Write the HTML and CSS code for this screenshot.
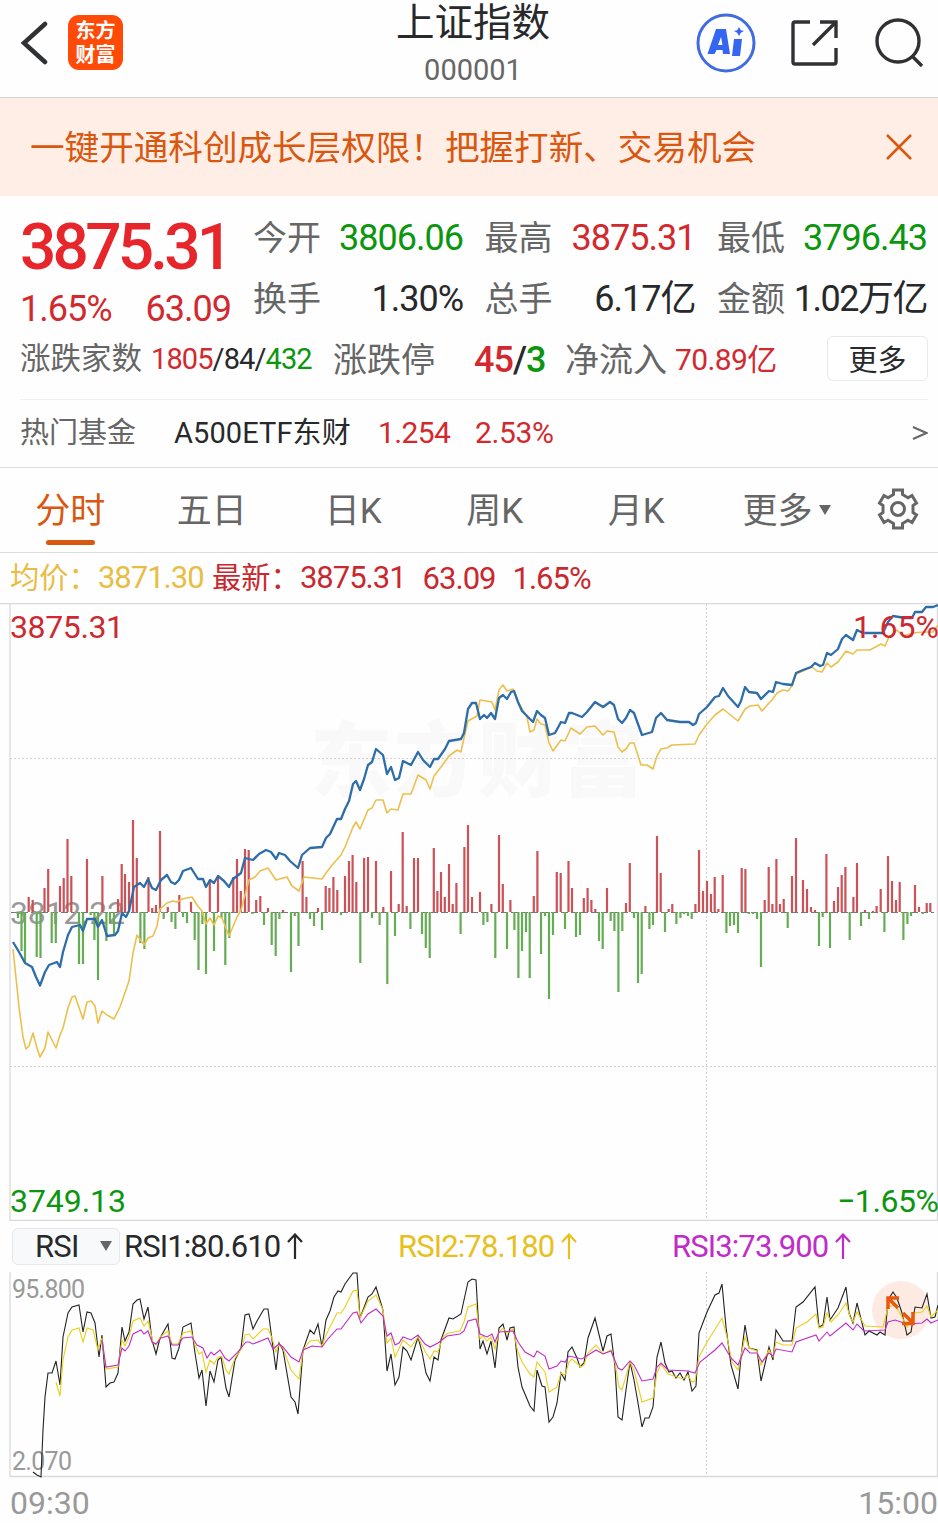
FILE: index.html
```html
<!DOCTYPE html>
<html lang="zh-CN">
<head>
    <meta charset="UTF-8">
    <meta name="viewport" content="width=device-width, initial-scale=1.0">
    <title>上证指数 000001</title>
    <link rel="stylesheet" href="styles.css">
</head>
<body>
    <!-- 顶部导航 -->
    <header class="header">
        <div class="header-left">
            <svg class="back" width="28" height="46" viewBox="0 0 28 46"><path d="M25 4L4 23L25 42"/></svg>
            <div class="logo"><span>东方</span><span>财富</span></div>
        </div>
        <div class="header-title">
            <h1>上证指数</h1>
            <span class="code">000001</span>
        </div>
        <div class="header-right">
            <svg width="60" height="60" viewBox="0 0 60 60">
                <circle cx="30" cy="30" r="28" fill="none" stroke="#416be0" stroke-width="3"/>
                <path fill="#3566f2" fill-rule="evenodd" d="M20 16h10l4 25h-7l-.5-4h-6l-2 4h-7zM25 24l-3 8h4.500zM38 26h8l-2 17h-8zM43 14l1.800 3.200L48 18l-3.200 1.800L43 23l-1.800-3.200L38 18l3.200-.8z"/>
            </svg>
            <svg width="48" height="48" viewBox="0 0 48 48" fill="none" stroke="#303133" stroke-width="3.400">
                <path d="M19 3H4Q2 3 2 5V43Q2 45 4 45H43Q45 45 45 43V29M29 3H45V19M44 4L22 26"/>
            </svg>
            <svg width="50" height="50" viewBox="0 0 50 50" fill="none" stroke="#303133" stroke-width="3.400">
                <circle cx="24" cy="23" r="21"/><path d="M38 38L48 48"/>
            </svg>
        </div>
    </header>

    <!-- 提示条 -->
    <div class="banner">
        <span>一键开通科创成长层权限！把握打新、交易机会</span>
        <svg width="26" height="26" viewBox="0 0 26 26"><path d="M1 1L25 25M25 1L1 25"/></svg>
    </div>

    <!-- 行情 -->
    <section class="quote">
        <div class="quote-top">
            <div class="price">
                <div class="price-now">3875.31</div>
                <div class="price-change"><span>1.65%</span><span>63.09</span></div>
            </div>
            <div class="stats">
                <div class="stat"><label>今开</label><b class="green">3806.06</b></div>
                <div class="stat"><label>最高</label><b class="red">3875.31</b></div>
                <div class="stat"><label>最低</label><b class="green">3796.43</b></div>
                <div class="stat"><label>换手</label><b>1.30%</b></div>
                <div class="stat"><label>总手</label><b>6.17亿</b></div>
                <div class="stat"><label>金额</label><b class="amount">1.02万亿</b></div>
            </div>
        </div>
        <div class="quote-more">
            <label class="count-label">涨跌家数</label>
            <span class="count"><i class="red">1805</i>/84/<i class="green">432</i></span>
            <label class="limit-label">涨跌停</label>
            <span class="limit"><i class="red">45</i>/<i class="green">3</i></span>
            <label class="flow-label">净流入</label>
            <span class="flow red">70.89亿</span>
            <button class="more-btn">更多</button>
        </div>
        <div class="fund">
            <label>热门基金</label>
            <span class="fund-name">A500ETF东财</span>
            <span class="fund-price red">1.254</span>
            <span class="fund-rate red">2.53%</span>
            <svg width="16" height="14" viewBox="0 0 16 14"><path d="M1 1L14.500 7L1 13"/></svg>
        </div>
    </section>

    <!-- 周期切换 -->
    <nav class="tabs">
        <a class="tab active">分时</a>
        <a class="tab">五日</a>
        <a class="tab">日K</a>
        <a class="tab">周K</a>
        <a class="tab">月K</a>
        <a class="tab tab-more">更多<i class="caret"></i></a>
        <a class="gear">
            <svg width="42" height="42" viewBox="0 0 42 42" fill="none" stroke="#666" stroke-width="3">
                <path d="M16.500 2H25.500V6.500L31 9.700L35 7.500L39.500 15L36 17.500V24.500L39.500 27L35 34.500L31 32.300L25.500 35.500V40H16.500V35.500L11 32.300L7 34.500L2.500 27L6 24.500V17.500L2.500 15L7 7.500L11 9.700L16.500 6.500Z"/>
                <circle cx="21" cy="21" r="6.500"/>
            </svg>
        </a>
    </nav>

    <div class="legend">
        <span class="avg">均价：<em>3871.30</em></span>
        <span class="last">最新：<em>3875.31</em></span>
        <em class="last diff">63.09</em>
        <em class="last">1.65%</em>
    </div>

    <!-- 分时图 -->
    <svg class="chart" width="938" height="618" viewBox="0 603 938 618">
        <text class="watermark" x="310" y="790" textLength="334">东方财富</text>
        <path class="frame" d="M0 603.500H938M10 603V1220.500H938M937.500 603V1220"/>
        <path class="grid" d="M10 758.500H938M10 1066.500H938M706.500 604V1220"/>
        <path class="zero" d="M11 912.500H934"/>
        <text class="axis mid" x="10" y="924" textLength="115">3812.22</text>
        <path class="bar-up" d="M28.700 912V897M32.700 912V900M44.500 912V888M48.200 912V869M60 912V886M63.700 912V878M67.500 912V839M71.300 912V876M87 912V859M102.400 912V876M118 912V899M121.700 912V864M125 912V874M129 912V882M133 912V820M136.800 912V858M148.500 912V877M152.200 912V908M156 912V905M160 912V831M167.800 912V907M179.300 912V895M191 912V902M209.800 912V880M218 912V878M233.300 912V877M237 912V859M240.800 912V891M245 912V849M248.700 912V850M256.200 912V900M260.300 912V896M268 912V908M283 912V910M302.600 912V861M306.400 912V897M318 912V908
            M325.700 912V886M329.400 912V888M333.400 912V877M337.300 912V890M345 912V876M349 912V861M352.600 912V855M356.300 912V882M364.100 912V858M368 912V857M376 912V861M383.300 912V907M391 912V871M398.700 912V904M402.700 912V832M406.700 912V906M414 912V858M418 912V858M433.800 912V848M437.400 912V891M441 912V872M444.800 912V897M449 912V864M452.700 912V904M456.400 912V883M464.400 912V847M468 912V825M472 912V897M480 912V892M491.400 912V904M499 912V835M502.800 912V884M510.400 912V900M533.800 912V896M537.400 912V851M556.800 912V872M560.700 912V873M568.500 912V861M572 912V888M583.800 912V898M587.600 912V888M591.400 912V900M595.300 912V909M607 912V888M626 912V903M629.800 912V863
            M645.400 912V906M657 912V836M660.700 912V873M668.700 912V909M672.300 912V904M695.400 912V904M699 912V850M703 912V891M707 912V881M711 912V894M714.700 912V877M718.400 912V909M722.700 912V875M741.700 912V868M745.400 912V869M764.700 912V900M768.700 912V867M772.400 912V904M776.400 912V859M780 912V904M783.700 912V899M792 912V876M796 912V838M803 912V880M807 912V889M811 912V907M815 912V910M826.400 912V854M834 912V901M838 912V887M841.700 912V875M845.400 912V867M853.400 912V897M857 912V863M865 912V910M873 912V911M876.600 912V906M880.700 912V889M888 912V856M892 912V881M896 912V900M899.700 912V882M915 912V885M919 912V907M926.700 912V903M930.300 912V903"/>
        <path class="bar-down" d="M18 912V918M21.500 912V951M25 912V963M36.700 912V957M40.500 912V958M51.700 912V943M55.800 912V943M79 912V964M83 912V964M90.600 912V915M94.400 912V940M98 912V980M106.400 912V941M110 912V923M114 912V936M140.400 912V943M144.400 912V949M163.700 912V919M171.500 912V922M175.400 912V929M183 912V917M187 912V923M194.700 912V940M198.500 912V970M202.400 912V924M206 912V974M214 912V951M221.500 912V918M225.300 912V965M229.300 912V938M252.400 912V914M264 912V925M271.700 912V945M275.700 912V956M279.400 912V919M291 912V972M294.800 912V916M298.500 912V946M310 912V919M314 912V926M322 912V930
            M341 912V915M360.300 912V963M372 912V918M379.600 912V925M387.300 912V984M395 912V936M410.400 912V929M422 912V934M425.800 912V948M429.700 912V958M460.600 912V934M483.400 912V925M487.400 912V922M495.300 912V958M507 912V949M514.400 912V930M518.400 912V978M522 912V951M526 912V932M529.700 912V978M541 912V954M545 912V916M549 912V999M553 912V935M565 912V929M576 912V937M580 912V935M599 912V941M602.700 912V949M610.700 912V921M614.400 912V931M618.400 912V992M622.300 912V931
            M634 912V918M638 912V983M641.700 912V974M649.400 912V929M653 912V925M665 912V932M676.400 912V924M680.400 912V918M684 912V914M688 912V916M691.700 912V919M726.400 912V933M730 912V926M734 912V925M738 912V933M749 912V914M753 912V914M757 912V919M761 912V967M787.700 912V928M819 912V946M822.700 912V917M830 912V948M849.700 912V940M861 912V926M869 912V919M884.400 912V932M903.400 912V940M907.400 912V924M911 912V916M922.700 912V914"/>
        <polyline class="line-avg" points="13,949 19,1007 23,1037 26,1049 29,1046 33,1033 37,1048 40,1057 45,1048 48,1032 56,1048 60,1035 63,1028 68,1008 72,997 75,996 83,1019 87,1002 91,1001 95,1006 98,1023 102,1011 107,1015 114,1019 120,1007 129,981 133,953 137,935 144,945 148,938 153,936 157,926 160,909 167,903 173,901 177,902 182,899 192,897 197,905 202,911 206,924 210,918 214,925 218,916 222,918 229,936 237,917 241,910 245,895 249,880 255,877 260,871 268,868 276,880 287,877 292,886 299,891 304,877 322,879 326,873 333,864 341,855 345,847 349,837 353,827 356,822 360,829 368,810 372,808 376,800 383,800 387,813 391,809 398,810 403,794 411,794 418,775 426,780 430,789 434,776 441,767 449,756 457,750 461,752 464,738 468,721 477,716 480,700 492,702 495,710 499,690 503,685 507,691 513,689 518,702 527,717 530,732 534,730 537,719 541,724 545,725 549,743 553,751 561,740 565,741 571,728 580,734 587,727 595,726 603,735 607,731 614,732 618,747 622,752 626,749 630,743 634,743 641,765 647,765 653,769 657,756 661,749 667,748 672,745 695,744 699,735 707,724 715,715 723,709 728,713 738,721 745,709 750,706 758,705 762,711 769,703 772,700 777,693 783,690 788,691 792,686 796,674 812,667 817,671 822,672 827,663 831,667 838,662 846,651 853,654 857,650 870,650 881,644 885,646 889,637 897,630 903,636 913,633 923,632 933,632 938,625"/>
        <polyline class="line-price" points="13,942 19,952 25,963 32,967 36,977 40,985.5 45,972 49,965 57,962 60,967 63,952 68,935 72,927 80,925 83,931 87,919 95,919 98,927 102,920 107,936 115,935 118,931 122,913 126,917 129,911 134,887 140,883 144,887 148,879 152,888 156,890 161,880 167,875 171,882 175,884 179,880 183,871 191,868 198,879 203,879 206,887 210,880 214,883 218,876 224,881 229,887 233,879 241,873 245,858 253,860 259,854 266,850 271,852 276,859 279,853 285,855 290,861 298,868 302,855 310,848 322,847 326,838 330,834 337,819 341,819 345,809 349,801 353,784 356,781 360,790 364,779 368,765 372,762 376,749 383,755 387,774 391,767 395,780 399,778 403,761 411,765 418,752 423,760 430,767 434,759 438,759 445,749 449,741 461,739 464,733 468,709 472,703 476,703 480,719 484,715 487,718 491,713 495,719 499,698 503,695 507,699 511,692 514,691 518,702 522,711 528,717 533,722 537,711 541,715 545,718 549,735 555,733 561,722 565,723 569,713 572,713 582,717 587,712 595,702 603,707 610,702 614,705 618,719 622,723 626,718 630,710 634,713 642,735 652,732 656,718 661,713 667,720 680,722 689,722 693,725 696,723 699,714 707,707 715,697 719,696 723,688 728,696 738,707 741,701 745,687 749,692 757,693 761,699 769,691 773,692 776,682 783,684 792,685 796,673 803,670 811,667 815,663 820,666 823,665 827,653 831,655 838,649 842,639 846,635 853,640 857,630 863,633 883,633 888,622 893,616 905,618 912,618 915,612 922,612 926,607 933,607 938,605"/>
        <text class="axis up" x="10" y="638" textLength="114">3875.31</text>
        <text class="axis up" x="853" y="638" textLength="86">1.65%</text>
        <text class="axis down" x="10" y="1212" textLength="116">3749.13</text>
        <text class="axis down" x="837" y="1212" textLength="102">−1.65%</text>
    </svg>

    <!-- RSI 指标 -->
    <div class="rsi-bar">
        <div class="rsi-select">RSI<i class="caret"></i></div>
        <span class="rsi-value rsi1">RSI1:80.610<svg width="16" height="26" viewBox="0 0 16 26"><path d="M8 26V2M1 9L8 1.500L15 9"/></svg></span>
        <span class="rsi-value rsi2">RSI2:78.180<svg width="16" height="26" viewBox="0 0 16 26"><path d="M8 26V2M1 9L8 1.500L15 9"/></svg></span>
        <span class="rsi-value rsi3">RSI3:73.900<svg width="16" height="26" viewBox="0 0 16 26"><path d="M8 26V2M1 9L8 1.500L15 9"/></svg></span>
    </div>
    <svg class="chart" width="938" height="206" viewBox="0 1272 938 206">
        <path class="frame" d="M10 1272V1476.500H938M937.500 1272V1477"/>
        <path class="grid" d="M706.500 1272V1476"/>
        <text class="axis-small" x="12" y="1298" textLength="73">95.800</text>
        <text class="axis-small" x="12" y="1470" textLength="60">2.070</text>
        <circle class="expand-bg" cx="901" cy="1310" r="29"/>
        <polyline class="rsi-line black" points="33,1472 37,1475 41,1477 43,1430 45,1397 48,1373 52,1373 56,1361 60,1385 63,1337 68,1313 72,1307 79,1305 83,1332 87,1312 91,1313 95,1323 99,1357 102,1335 106,1387 110,1383 114,1382 118,1373 122,1327 125,1341 129,1332 133,1304 137,1300 140,1299 144,1319 148,1307 152,1340 156,1354 160,1338 168,1324 172,1358 175,1359 179,1348 183,1327 191,1323 195,1353 199,1378 202,1370 206,1406 210,1371 214,1382 218,1360 221,1357 226,1388 229,1397 235,1360 241,1348 245,1315 249,1314 253,1329 257,1321 264,1309 268,1309 272,1340 276,1370 279,1343 283,1350 291,1397 295,1402 298,1414 303,1350 310,1330 314,1334 318,1324 322,1347 326,1320 330,1311 334,1297 338,1291 341,1292 345,1284 353,1273 357,1273 360,1318 368,1297 372,1294 376,1287 383,1310 387,1371 391,1354 395,1385 399,1377 403,1347 407,1351 411,1360 418,1337 422,1352 426,1373 430,1381 434,1357 438,1360 441,1340 449,1318 453,1319 461,1314 464,1300 468,1282 472,1279 476,1280 480,1349 483,1341 487,1354 491,1341 495,1368 499,1328 503,1324 507,1340 510,1328 514,1327 518,1367 522,1387 530,1406 534,1411 537,1370 542,1386 545,1387 549,1422 553,1417 557,1403 561,1373 565,1380 568,1352 572,1347 577,1358 580,1367 584,1363 588,1338 595,1318 603,1351 607,1336 611,1334 615,1367 618,1417 622,1420 626,1390 630,1362 634,1380 638,1403 642,1427 645,1418 649,1418 653,1407 657,1357 661,1342 665,1363 669,1372 672,1371 676,1378 680,1373 684,1380 688,1372 692,1391 696,1386 699,1333 707,1312 715,1295 719,1293 722,1284 726,1327 731,1365 738,1389 741,1357 745,1325 749,1348 757,1350 761,1381 769,1347 773,1360 776,1330 783,1341 792,1341 796,1307 803,1302 815,1287 819,1327 823,1325 827,1297 830,1320 838,1308 846,1287 849,1313 853,1323 857,1303 865,1335 869,1331 877,1335 880,1332 885,1335 888,1300 893,1292 897,1298 902,1313 907,1335 911,1332 915,1307 922,1308 927,1294 931,1318 935,1317 938,1305"/>
        <polyline class="rsi-line yellow" points="56,1382 60,1396 63,1360 68,1337 72,1330 79,1328 83,1342 87,1328 93,1330 98,1350 102,1338 106,1369 118,1367 122,1340 125,1346 129,1337 133,1321 140,1318 144,1326 148,1321 153,1342 156,1345 160,1337 168,1331 172,1344 178,1344 183,1333 191,1331 195,1345 199,1354 202,1352 206,1372 210,1360 214,1364 218,1357 222,1357 226,1370 229,1374 235,1358 242,1348 245,1335 249,1334 253,1339 263,1329 268,1329 272,1338 276,1352 279,1344 283,1348 291,1370 299,1379 303,1350 310,1341 318,1340 322,1346 326,1335 337,1313 341,1313 345,1307 353,1291 357,1290 360,1318 368,1301 376,1295 383,1310 387,1343 391,1338 395,1357 403,1340 411,1347 418,1337 426,1353 430,1359 434,1351 438,1352 443,1337 448,1333 460,1331 464,1322 468,1307 476,1304 480,1339 483,1336 487,1341 491,1337 495,1349 499,1332 503,1328 507,1333 513,1329 518,1352 522,1362 530,1374 534,1377 537,1362 545,1372 549,1392 557,1387 561,1373 565,1375 569,1362 572,1359 581,1367 584,1365 588,1353 596,1345 603,1354 611,1350 615,1363 619,1387 622,1390 630,1362 634,1370 642,1402 653,1398 657,1373 661,1364 668,1374 683,1379 688,1375 692,1382 695,1381 699,1357 707,1342 717,1326 722,1318 727,1337 732,1362 738,1370 745,1337 749,1348 757,1351 761,1365 769,1350 773,1357 776,1342 783,1345 792,1345 796,1328 807,1322 816,1314 819,1328 823,1327 827,1313 831,1322 838,1315 846,1303 850,1317 853,1322 857,1312 865,1326 883,1327 888,1307 895,1305 902,1317 907,1327 915,1313 922,1312 927,1306 931,1317 938,1310"/>
        <polyline class="rsi-line magenta" points="102,1340 106,1367 118,1365 122,1348 125,1351 129,1346 133,1334 141,1330 144,1334 148,1331 152,1342 156,1344 161,1338 168,1336 172,1345 178,1345 183,1338 192,1337 197,1345 203,1348 207,1358 211,1352 214,1355 220,1350 225,1358 229,1361 236,1354 241,1348 246,1342 249,1342 253,1344 268,1338 273,1349 279,1344 283,1347 291,1357 299,1362 303,1350 312,1346 322,1347 327,1340 337,1329 341,1329 353,1313 357,1312 361,1323 368,1314 376,1309 383,1316 387,1336 391,1333 395,1345 399,1343 403,1337 411,1340 418,1335 425,1344 430,1347 438,1343 447,1336 460,1334 464,1331 468,1321 476,1319 480,1334 487,1337 492,1334 495,1342 499,1332 513,1331 518,1342 525,1352 534,1357 537,1351 545,1356 549,1369 557,1366 561,1361 565,1362 569,1356 582,1359 596,1350 603,1354 611,1351 618,1368 622,1370 630,1361 634,1365 642,1381 653,1379 657,1367 661,1363 668,1370 688,1371 695,1373 700,1362 715,1350 722,1343 731,1358 738,1365 745,1348 750,1353 757,1353 762,1362 769,1353 773,1356 776,1349 792,1352 796,1342 816,1335 819,1341 827,1332 830,1336 846,1323 853,1330 857,1324 864,1331 885,1330 888,1322 895,1320 907,1324 922,1323 927,1319 931,1323 938,1320"/>
        <path class="expand" d="M888 1309V1298H899M889 1299L898 1308M903 1313L912 1322M902 1323.500H913V1312"/>
    </svg>
    <div class="time-axis"><span>09:30</span><span>15:00</span></div>
</body>
</html>
```
FILE: styles.css
```css
* {
    box-sizing: border-box;
}
body {
    margin: 0;
    width: 938px;
    height: 1523px;
    overflow: hidden;
    background: #fefefe;
    color: #28292b;
    font-family: Roboto, "Noto Sans CJK SC", sans-serif;
    line-height: 1;
    white-space: nowrap;
}
svg {
    display: block;
    flex: none;
}
i, em, b {
    font-style: normal;
    font-weight: normal;
}
label {
    color: #666;
}
.red {
    color: #d2292f;
}
.green {
    color: #0c960f;
}

/* 顶部 */
.header {
    display: grid;
    grid-template-columns: 320px 1fr 314px;
    height: 98px;
    border-bottom: 1px solid #d5d2d1;
}
.header-left {
    display: flex;
    align-items: flex-start;
    padding: 15px 0 0 20px;
    gap: 20px;
}
.back {
    margin-top: 5px;
    fill: none;
    stroke: #303133;
    stroke-width: 4.5;
    stroke-linecap: round;
}
.logo {
    display: flex;
    flex-direction: column;
    align-items: center;
    justify-content: center;
    gap: 4px;
    width: 55px;
    height: 55px;
    border-radius: 11px;
    background: #ff4a08;
    color: #fff;
    font-size: 20px;
    font-weight: bold;
}
.header-title {
    text-align: center;
    padding: 4px 0 0 2px;
}
.header-title h1 {
    margin: 0;
    font-size: 38.5px;
    font-weight: normal;
}
.code {
    display: block;
    margin-top: 13px;
    font-size: 29px;
    color: #666;
}
.header-right {
    display: flex;
    align-items: center;
    padding: 0 0 11px 72px;
    gap: 35px;
}

.banner {
    display: flex;
    align-items: center;
    justify-content: space-between;
    height: 98px;
    padding: 2px 26px 0 30px;
    background: #feeee6;
    color: #d9570f;
    font-size: 34.6px;
}
.banner svg {
    margin-top: -2px;
    fill: none;
    stroke: #d9570f;
    stroke-width: 2.5;
}

/* 行情 */
.quote {
    height: 272px;
    padding: 12px 10px 0 20px;
    border-bottom: 1px solid #ddd;
}
.quote-top {
    display: flex;
}
.price {
    width: 233px;
    color: #d2292f;
}
.price-now {
    margin-top: 8px;
    font-size: 64px;
    font-weight: 500;
    letter-spacing: -3.8px;
    color: #e6262a;
}
.price-change {
    display: flex;
    justify-content: space-between;
    width: 211px;
    margin-top: 11px;
    font-size: 36px;
    letter-spacing: -1px;
}
.stats {
    display: grid;
    grid-template-columns: 210px 211px 210px;
    grid-auto-rows: 60.5px;
    column-gap: 21.5px;
}
.stat {
    display: flex;
    align-items: center;
    justify-content: space-between;
    font-size: 34px;
}
.stat b {
    font-size: 36px;
    letter-spacing: -1px;
}
.stat .amount {
    letter-spacing: -1.5px;
}
.quote-more {
    display: flex;
    align-items: center;
    height: 70px;
    margin-top: -4px;
    padding-bottom: 1px;
}
.count-label {
    width: 131px;
    font-size: 30.5px;
}
.count {
    width: 182px;
    font-size: 29px;
    letter-spacing: -0.9px;
}
.limit-label {
    width: 141px;
    font-size: 34px;
}
.limit {
    width: 91px;
    font-size: 36px;
    font-weight: 500;
    letter-spacing: -1px;
}
.limit i {
    font-weight: 500;
}
.flow-label {
    width: 110px;
    font-size: 34px;
}
.flow {
    font-size: 30px;
    letter-spacing: -0.6px;
}
.more-btn {
    width: 101px;
    height: 45px;
    margin-left: auto;
    margin-bottom: 3px;
    padding: 0 0 3px;
    border: 1px solid #e8e8e8;
    border-radius: 6px;
    background: #fff;
    color: #28292b;
    font-family: inherit;
    font-size: 29px;
}
.fund {
    display: flex;
    align-items: center;
    height: 69px;
    margin-top: 4px;
    padding-bottom: 2px;
    border-top: 1px solid #f0f0f0;
    font-size: 29px;
}
.fund label {
    width: 154px;
}
.fund-name {
    width: 204px;
    letter-spacing: 0.1px;
}
.fund-price {
    width: 97px;
    font-size: 30px;
    letter-spacing: -0.6px;
}
.fund-rate {
    font-size: 30px;
    letter-spacing: -0.4px;
}
.fund svg {
    margin-left: auto;
    fill: none;
    stroke: #666;
    stroke-width: 2;
}

/* 周期 */
.tabs {
    display: flex;
    height: 85px;
    border-bottom: 1px solid #ddd;
}
.tab {
    display: flex;
    flex-direction: column;
    align-items: center;
    width: 141.5px;
    padding: 26px 1px 0 0;
    font-size: 35px;
    color: #666;
}
.active {
    color: #d9570f;
}
.active::after {
    content: "";
    width: 49px;
    height: 5px;
    margin-top: 11px;
    border-radius: 3px;
    background: #d9570f;
}
.caret {
    border: 6px solid transparent;
    border-top: 10px solid #666;
    border-bottom: 0;
}
.tab-more {
    flex-direction: row;
    align-items: flex-start;
    justify-content: center;
    width: 159px;
}
.tab-more .caret {
    margin: 11px 0 0 6px;
}
.gear {
    margin: 20px 0 0 10px;
}
.legend {
    display: flex;
    align-items: center;
    height: 50px;
    padding-left: 10px;
    font-size: 29.3px;
    color: #c9282f;
}
.legend em {
    font-size: 31px;
    letter-spacing: -1px;
}
.avg {
    width: 202px;
    color: #e8bd45;
}
.last {
    margin-right: 17px;
}

/* 图表 */
.frame {
    fill: none;
    stroke: #d9d9d9;
    stroke-width: 1.3;
}
.grid {
    stroke: #d2d2d2;
    stroke-dasharray: 2 2;
}
.zero {
    stroke: #777;
    stroke-dasharray: 7 3;
}
.watermark {
    font: 900 82px "Noto Sans CJK SC", sans-serif;
    fill: #f9f9f9;
}
.bar-up {
    stroke: #cb5257;
    stroke-width: 2.2;
}
.bar-down {
    stroke: #65ac54;
    stroke-width: 2.2;
}
.line-avg,
.line-price {
    fill: none;
    stroke: #ebc04e;
    stroke-width: 1.6;
    stroke-linejoin: round;
}
.line-price {
    stroke: #2e6da8;
    stroke-width: 2.3;
}
.axis {
    font-size: 32px;
}
.mid {
    fill: #999;
}
.up {
    fill: #cc2930;
}
.down {
    fill: #0c960f;
}
.axis-small {
    font-size: 25px;
    fill: #999;
}
.rsi-bar {
    display: flex;
    align-items: center;
    height: 51px;
    padding: 0 0 1px 12px;
    font-size: 31px;
}
.rsi-select {
    display: flex;
    flex: none;
    align-items: center;
    justify-content: space-between;
    width: 108px;
    height: 37px;
    margin-right: 4px;
    padding: 0 7px 0 22px;
    border: 1px solid #e8e8ea;
    border-radius: 6px;
    background: #f8f9fb;
    letter-spacing: -0.8px;
}
.rsi-value {
    display: flex;
    flex: none;
    align-items: center;
    width: 274px;
    letter-spacing: -0.9px;
}
.rsi-value svg {
    margin-left: 7px;
    fill: none;
    stroke: currentColor;
    stroke-width: 2.2;
}
.rsi2 {
    color: #e8c01c;
}
.rsi3 {
    color: #c02cc8;
}
.rsi-line {
    fill: none;
    stroke-width: 1.1;
}
.black {
    stroke: #222;
}
.yellow {
    stroke: #e8d01c;
}
.magenta {
    stroke: #c02cc8;
}
.expand-bg {
    fill: #fdebe3;
}
.expand {
    fill: none;
    stroke: #e8590c;
    stroke-width: 3.5;
}
.time-axis {
    display: flex;
    justify-content: space-between;
    padding: 9px 0 0 10px;
    font-size: 32px;
    color: #999;
}
```
